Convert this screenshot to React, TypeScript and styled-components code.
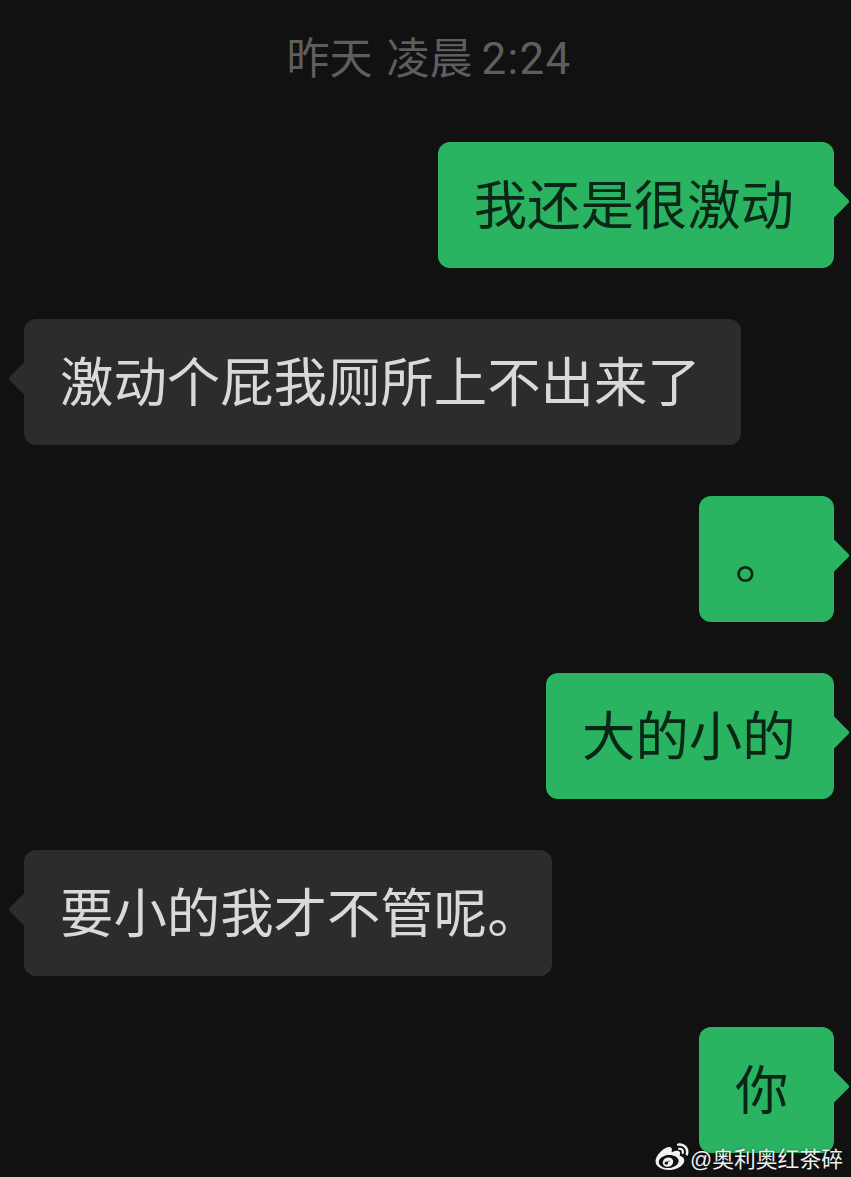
import styled, { createGlobalStyle } from "styled-components";
import { RiWeiboFill } from "react-icons/ri";

const GlobalStyle = createGlobalStyle`
  html, body {
    margin: 0;
    padding: 0;
    background: #111111;
  }
`;

const Screen = styled.div`
  position: relative;
  width: 851px;
  height: 1177px;
  overflow: hidden;
  background: #111111;
  font-family: "Roboto", "Noto Sans CJK SC", sans-serif;
`;

const Thread = styled.div`
  display: flex;
  flex-direction: column;
  gap: 51px;
  padding: 0 17px 0 24px;
`;

const TimeStamp = styled.div`
  display: flex;
  justify-content: center;
  gap: 14px;
  height: 142px;
  margin-bottom: -51px;
  padding-top: 30px;
  box-sizing: border-box;
  font-size: 43px;
  line-height: 58px;
  color: #5e5e5e;
`;

const Clock = styled.span`
  letter-spacing: 1.3px;
  font-size: 44px;
  margin-left: -5px;
`;

const Row = styled.div<{ $mine?: boolean }>`
  display: flex;
  justify-content: ${(p) => (p.$mine ? "flex-end" : "flex-start")};
`;

const Bubble = styled.div<{ $mine?: boolean; $width?: number }>`
  position: relative;
  box-sizing: border-box;
  height: 126px;
  min-width: 135px;
  width: ${(p) => (p.$width ? `${p.$width}px` : "auto")};
  padding: 0 40px 6px 36px;
  border-radius: 12px;
  background: ${(p) => (p.$mine ? "#2ab462" : "#2c2c2c")};
  color: ${(p) => (p.$mine ? "#0a2715" : "#d9d9d9")};
  font-family: "Noto Sans CJK SC", sans-serif;
  font-size: 53.4px;
  line-height: 120px;
  white-space: nowrap;

  &::after {
    content: "";
    position: absolute;
    top: 47px;
    ${(p) => (p.$mine ? "right: -11px;" : "left: -11px;")}
    width: 25px;
    height: 25px;
    border-radius: 3px;
    background: inherit;
    transform: rotate(45deg);
  }
`;

const Watermark = styled.div`
  position: absolute;
  right: 8px;
  bottom: 2px;
  display: flex;
  align-items: center;
  gap: 0;
  color: #f0f0f0;
  font-family: "Liberation Sans", "Noto Sans CJK SC", sans-serif;
  font-size: 21.8px;
  line-height: 28px;
  white-space: nowrap;
  text-shadow: 0 0 2px rgba(0, 0, 0, 0.6);
`;

const WeiboIcon = styled(RiWeiboFill)`
  width: 36px;
  height: 36px;
  margin-top: -6px;
  color: #f2f2f2;
`;

const messages: { text: string; mine?: boolean; width?: number }[] = [
  { text: "我还是很激动", mine: true },
  { text: "激动个屁我厕所上不出来了" },
  { text: "。", mine: true },
  { text: "大的小的", mine: true, width: 288 },
  { text: "要小的我才不管呢。", width: 528 },
  { text: "你", mine: true },
];

export default function App() {
  return (
    <Screen>
      <GlobalStyle />
      <Thread>
        <TimeStamp>
          <span>昨天</span>
          <span>凌晨</span>
          <Clock>2:24</Clock>
        </TimeStamp>
        {messages.map((m) => (
          <Row key={m.text} $mine={m.mine}>
            <Bubble $mine={m.mine} $width={m.width}>
              {m.text}
            </Bubble>
          </Row>
        ))}
      </Thread>
      <Watermark>
        <WeiboIcon />
        <span>@奥利奥红茶碎</span>
      </Watermark>
    </Screen>
  );
}
